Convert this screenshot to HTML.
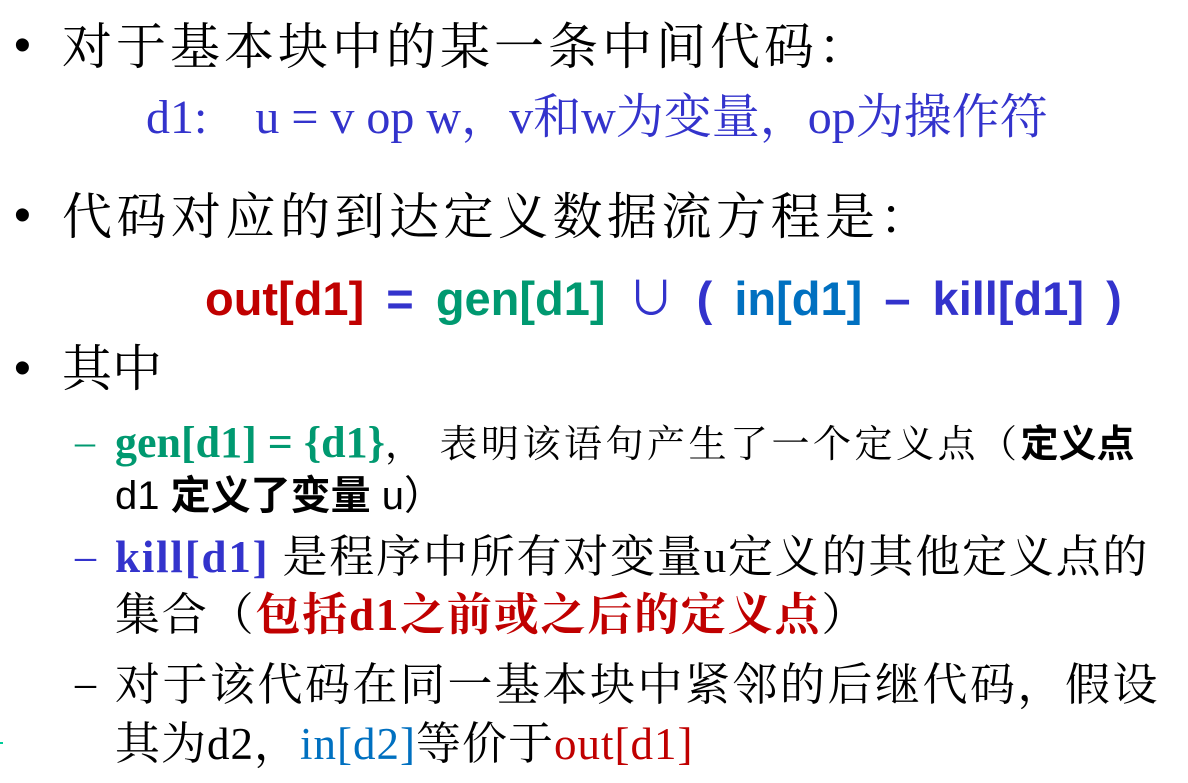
<!DOCTYPE html>
<html><head><meta charset="utf-8"><style>
body{margin:0;width:1188px;height:783px;background:#fff;overflow:hidden;position:relative;font-family:"Liberation Serif","Noto Serif CJK SC","Noto Sans CJK SC",serif;color:#000}
.l{position:absolute;white-space:nowrap;line-height:1}
.s{font-family:"Liberation Sans","Noto Sans CJK SC",sans-serif}
.b{font-weight:bold}
.g{color:#009970}.r{color:#c00000}.bl{color:#0070c0}.pu{color:#3333cc}
</style></head><body>
<div class="l s" style="left:14px;top:22px;font-size:48px">•</div>
<div class="l" style="left:62px;top:22px;font-size:50px;letter-spacing:4px">对于基本块中的某一条中间代码：</div>
<div class="l pu" style="left:146px;top:94px;font-size:48px">d1:&nbsp;&nbsp;&nbsp; u = v op w，v和w为变量，op为操作符</div>
<div class="l s" style="left:14px;top:192px;font-size:48px">•</div>
<div class="l" style="left:62px;top:192px;font-size:50px;letter-spacing:4.5px">代码对应的到达定义数据流方程是：</div>
<div class="l s b" style="left:205px;top:275px;font-size:47px;word-spacing:9px"><span class="r">out[d1]</span> <span class="pu">=</span> <span class="g">gen[d1]</span> <span class="pu" style="font-weight:normal">∪</span> <span class="pu">(</span> <span class="bl">in[d1]</span> <span class="pu">– kill[d1] )</span></div>
<div class="l s" style="left:14px;top:345px;font-size:48px">•</div>
<div class="l" style="left:62px;top:344px;font-size:50px">其中</div>
<div class="l" style="left:75px;top:422px;font-size:40px"><span class="g">–</span></div>
<div class="l" style="left:115px;top:421px;font-size:44px"><span class="g b">gen[d1] = {d1}</span><span style="font-size:38px;letter-spacing:3.5px">，&nbsp;表明该语句产生了一个定义点（</span><span class="s b" style="font-size:38px">定义点</span></div>
<div class="l s" style="left:115px;top:476px;font-size:40px">d1 <b>定义了变量</b> u）</div>
<div class="l" style="left:75px;top:536px;font-size:42px"><span class="pu">–</span></div>
<div class="l" style="left:115px;top:535px;font-size:45px;letter-spacing:1.8px"><span class="pu b">kill[d1]</span> 是程序中所有对变量u定义的其他定义点的</div>
<div class="l" style="left:115px;top:593px;font-size:45px;letter-spacing:1.8px">集合（<span class="r b">包括d1之前或之后的定义点</span>）</div>
<div class="l" style="left:75px;top:663px;font-size:42px">–</div>
<div class="l" style="left:115px;top:663px;font-size:45px;letter-spacing:2.5px">对于该代码在同一基本块中紧邻的后继代码，假设</div>
<div class="l" style="left:115px;top:722px;font-size:45px;letter-spacing:1px">其为d2，<span class="bl">in[d2]</span>等价于<span class="r">out[d1]</span></div>
<div class="l" style="left:0;top:742px;width:3px;height:2px;background:#0c9"></div>
</body></html>
